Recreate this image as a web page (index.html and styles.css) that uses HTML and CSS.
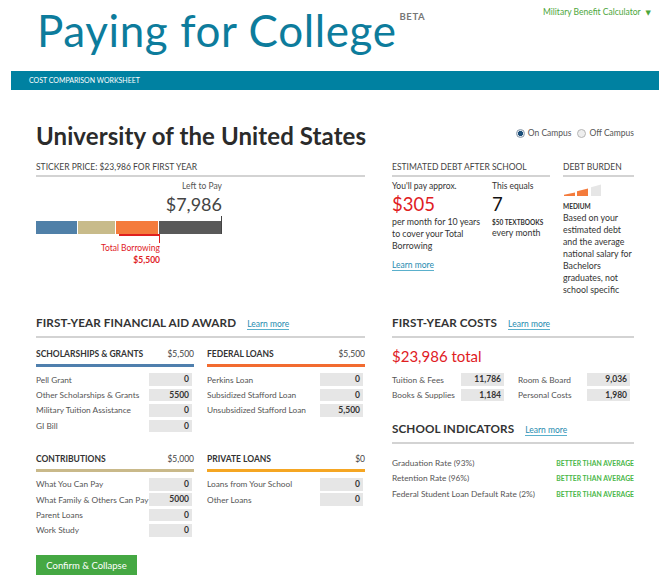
FILE: index.html
```html
<!DOCTYPE html>
<html>
<head>
<meta charset="utf-8">
<link rel="stylesheet" href="styles.css">
</head>
<body>
<div class="page">
  <header class="masthead">
    <h1 class="brand">Paying for College<span class="beta">BETA</span></h1>
    <a class="mil">Military Benefit Calculator <span class="caret">&#9660;</span></a>
  </header>
  <div class="band">COST COMPARISON WORKSHEET</div>
  <main class="content">
    <div class="school-row">
      <h2 class="school">University of the United States</h2>
      <div class="housing">
        <span class="opt"><span class="radio on"></span>On Campus</span>
        <span class="opt"><span class="radio"></span>Off Campus</span>
      </div>
    </div>
    <div class="grid">
      <section class="sticker">
        <h3 class="label-head">STICKER PRICE: $23,986 FOR FIRST YEAR</h3>
        <div class="chart">
          <div class="left-label">Left to Pay</div>
          <div class="left-amount">$7,986</div>
          <div class="bar">
            <span class="seg s-blue"></span>
            <span class="seg s-tan"></span>
            <span class="seg s-orange"></span>
            <span class="seg s-gray"></span>
          </div>
          <div class="bracket"></div>
          <div class="borrow">
            <div class="borrow-label">Total Borrowing</div>
            <div class="borrow-amount">$5,500</div>
          </div>
        </div>
      </section>
      <section class="debt">
        <div class="est">
          <h3 class="label-head">ESTIMATED DEBT AFTER SCHOOL</h3>
          <div class="est-cols">
            <div class="est-a">
              <div class="small">You'll pay approx.</div>
              <div class="big red">$305</div>
              <div class="txt">per month for 10 years to cover your Total Borrowing</div>
              <a class="learn">Learn more</a>
            </div>
            <div class="est-b">
              <div class="small">This equals</div>
              <div class="big">7</div>
              <div class="tiny-bold">$50 TEXTBOOKS</div>
              <div class="txt">every month</div>
            </div>
          </div>
        </div>
        <div class="burden">
          <h3 class="label-head">DEBT BURDEN</h3>
          <svg class="meter" width="40" height="13" viewBox="0 0 40 13">
            <polygon points="1,12 12,12 12,8.5 1,10.8" fill="#f47b3c"/>
            <polygon points="14,12 25,12 25,4.5 14,7.2" fill="#f47b3c"/>
            <polygon points="28,12 38,12 38,0.5 28,3.2" fill="#e6e6e6"/>
          </svg>
          <div class="tiny-bold">MEDIUM</div>
          <div class="txt">Based on your estimated debt and the average national salary for Bachelors graduates, not school specific</div>
        </div>
      </section>
      <section class="aid">
        <div class="sec-head"><h3>FIRST-YEAR FINANCIAL AID AWARD</h3><a class="learn">Learn more</a></div>
        <div class="aid-grid">
          <div class="group">
            <div class="group-head blue"><span>SCHOLARSHIPS &amp; GRANTS</span><span>$5,500</span></div>
            <div class="row"><span>Pell Grant</span><span class="box">0</span></div>
            <div class="row"><span>Other Scholarships &amp; Grants</span><span class="box">5500</span></div>
            <div class="row"><span>Military Tuition Assistance</span><span class="box">0</span></div>
            <div class="row"><span>GI Bill</span><span class="box">0</span></div>
          </div>
          <div class="group">
            <div class="group-head orange"><span>FEDERAL LOANS</span><span>$5,500</span></div>
            <div class="row"><span>Perkins Loan</span><span class="box">0</span></div>
            <div class="row"><span>Subsidized Stafford Loan</span><span class="box">0</span></div>
            <div class="row"><span>Unsubsidized Stafford Loan</span><span class="box">5,500</span></div>
          </div>
          <div class="group">
            <div class="group-head tan"><span>CONTRIBUTIONS</span><span>$5,000</span></div>
            <div class="row"><span>What You Can Pay</span><span class="box">0</span></div>
            <div class="row"><span>What Family &amp; Others Can Pay</span><span class="box">5000</span></div>
            <div class="row"><span>Parent Loans</span><span class="box">0</span></div>
            <div class="row"><span>Work Study</span><span class="box">0</span></div>
          </div>
          <div class="group">
            <div class="group-head yellow"><span>PRIVATE LOANS</span><span>$0</span></div>
            <div class="row"><span>Loans from Your School</span><span class="box">0</span></div>
            <div class="row"><span>Other Loans</span><span class="box">0</span></div>
          </div>
        </div>
      </section>
      <section class="costs">
        <div class="sec-head"><h3>FIRST-YEAR COSTS</h3><a class="learn">Learn more</a></div>
        <div class="total">$23,986 total</div>
        <div class="cost-grid">
          <div class="row"><span>Tuition &amp; Fees</span><span class="box">11,786</span></div>
          <div class="row"><span>Room &amp; Board</span><span class="box">9,036</span></div>
          <div class="row"><span>Books &amp; Supplies</span><span class="box">1,184</span></div>
          <div class="row"><span>Personal Costs</span><span class="box">1,980</span></div>
        </div>
        <div class="sec-head ind-head"><h3>SCHOOL INDICATORS</h3><a class="learn">Learn more</a></div>
        <div class="ind">
          <div class="ind-row"><span>Graduation Rate (93%)</span><span class="good">BETTER THAN AVERAGE</span></div>
          <div class="ind-row"><span>Retention Rate (96%)</span><span class="good">BETTER THAN AVERAGE</span></div>
          <div class="ind-row"><span>Federal Student Loan Default Rate (2%)</span><span class="good">BETTER THAN AVERAGE</span></div>
        </div>
      </section>
    </div>
    <button class="confirm">Confirm &amp; Collapse</button>
  </main>
</div>
</body>
</html>
```

FILE: styles.css
```css
* { box-sizing: border-box; }
body {
  margin: 0;
  background: #fff;
  font-family: Lato, "Open Sans", sans-serif;
  color: #444;
}
.page { width: 670px; }

.masthead {
  display: flex;
  justify-content: space-between;
  align-items: flex-start;
  height: 71px;
  padding: 0 19px 0 37px;
}
.brand {
  margin: 4px 0 0 0;
  font-size: 44px;
  font-weight: 400;
  color: #0d7c9c;
  line-height: 52px;
  letter-spacing: 0.6px;
}
.beta {
  font-size: 9.5px;
  font-weight: 700;
  color: #777;
  letter-spacing: 0.6px;
  vertical-align: top;
  line-height: 10px;
  margin-left: 3px;
  position: relative;
  top: 8px;
}
.mil {
  margin-top: 7px;
  font-size: 8.5px;
  color: #4ca63b;
}
.caret { font-size: 7px; margin-left: 3px; font-family: "DejaVu Sans", sans-serif; }

.band {
  margin: 0 11px;
  height: 19px;
  background: #0081a1;
  color: #fff;
  font-size: 7px;
  line-height: 19px;
  padding-left: 18px;
}

.content { padding: 0 36px 0 36px; }

.school-row {
  display: flex;
  justify-content: space-between;
  align-items: center;
  margin-top: 30px;
  height: 30px;
}
.school {
  margin: 0;
  font-size: 24px;
  font-weight: 700;
  color: #2b2b2b;
  letter-spacing: 0.1px;
}
.housing {
  display: flex;
  gap: 6px;
  font-size: 8.5px;
  color: #555;
  margin-top: -4px;
}
.opt { display: flex; align-items: center; gap: 3px; }
.radio {
  width: 9px; height: 9px;
  border-radius: 50%;
  border: 1px solid #b5b5b5;
  background: #eee;
  display: inline-block;
}
.radio.on {
  background: radial-gradient(circle, #1c4f7a 0 2.3px, #dde3ea 2.8px);
  border-color: #8a9aaa;
}

.grid {
  display: grid;
  grid-template-columns: 329px 242px;
  column-gap: 27px;
  margin-top: 12px;
}

.label-head {
  margin: 0;
  font-size: 8.5px;
  font-weight: 400;
  color: #444;
  padding-bottom: 2px;
  border-bottom: 2px solid #d3d3d3;
  line-height: 11px;
}

/* sticker */
.chart { width: 186px; margin-top: 4px; }
.left-label { text-align: right; font-size: 8.5px; color: #555; line-height: 11px; }
.left-amount { text-align: right; font-size: 18px; color: #444; line-height: 23px; margin-top: 1px; }
.bar {
  display: flex;
  gap: 1px;
  height: 18px;
  align-items: flex-end;
  border-right: 1px solid #444;
}
.seg { height: 13px; display: block; }
.s-blue { width: 41px; background: #5080a8; }
.s-tan { width: 37px; background: #c8bb8a; }
.s-orange { width: 42px; background: #f47b3c; }
.s-gray { flex: 1; background: #595959; }
.bracket {
  margin-left: 83px;
  width: 41px;
  height: 9px;
  border-top: 2px solid #e0201f;
  border-right: 1px solid #e0201f;
}
.borrow { width: 124px; text-align: right; color: #e0201f; }
.borrow-label { font-size: 8.5px; line-height: 11px; }
.borrow-amount { font-size: 8.5px; font-weight: 700; line-height: 11px; margin-top: 1px; }

/* debt */
.debt { display: flex; gap: 13px; }
.est { width: 158px; }
.burden { width: 71px; }
.est-cols { display: grid; grid-template-columns: 100px 58px; margin-top: 4px; }
.small { font-size: 8.5px; line-height: 11px; color: #333; }
.big { font-size: 18.5px; line-height: 23px; color: #111; margin-top: 1px; }
.red { color: #e0201f; }
.txt { font-size: 8.8px; line-height: 12px; color: #333; }
.est-a .txt { max-width: 92px; }
.tiny-bold { font-size: 6.5px; font-weight: 700; color: #333; line-height: 10px; margin-top: 2px; }
.est-b .txt { margin-top: -1px; }
.learn {
  display: inline-block;
  font-size: 8.5px;
  color: #1f8bb0;
  border-bottom: 1px solid #5ab0cc;
  line-height: 10px;
}
.est-a .learn { margin-top: 5px; }
.meter { display: block; margin-top: 7px; }
.burden .tiny-bold { margin-top: 5px; }

/* sections row 2 */
.aid, .costs { margin-top: 18px; }
.sec-head {
  display: flex;
  align-items: baseline;
  gap: 11px;
  border-bottom: 2px solid #d3d3d3;
  padding-bottom: 6px;
}
.sec-head h3 {
  margin: 0;
  font-size: 11.7px;
  font-weight: 700;
  color: #333;
  letter-spacing: 0.1px;
  line-height: 16px;
}
.aid-grid {
  display: grid;
  grid-template-columns: 158px 158px;
  column-gap: 13px;
  row-gap: 20px;
  margin-top: 11px;
}
.group-head {
  display: flex;
  justify-content: space-between;
  font-size: 8.5px;
  font-weight: 700;
  color: #333;
  line-height: 11px;
  padding-bottom: 4px;
  border-bottom: 3px solid;
  margin-bottom: 5px;
}
.group-head span:last-child { font-weight: 400; color: #444; }
.group-head.blue { border-color: #4f7fad; }
.group-head.orange { border-color: #f26b30; }
.group-head.tan { border-color: #c9b98a; }
.group-head.yellow { border-color: #f5a623; }

.row {
  display: flex;
  justify-content: space-between;
  align-items: center;
  height: 15.4px;
  font-size: 8.3px;
  color: #555;
}
.box {
  width: 43px;
  height: 12.5px;
  background: #e6e6e6;
  text-align: right;
  padding-right: 3px;
  font-size: 8.5px;
  font-weight: 700;
  color: #333;
  line-height: 12.5px;
}
.aid .box { margin-right: 2px; }

.total { font-size: 15px; color: #e0201f; line-height: 19px; margin-top: 9px; }
.cost-grid {
  display: grid;
  grid-template-columns: 112px 112px;
  column-gap: 14px;
  margin-top: 6px;
}
.ind-head { margin-top: 17px; }
.ind { margin-top: 11px; }
.ind-row {
  display: flex;
  justify-content: space-between;
  align-items: center;
  height: 15.5px;
  font-size: 8.3px;
  color: #555;
}
.good { font-size: 6.8px; font-weight: 700; color: #4ab748; }

.confirm {
  display: block;
  margin-top: 17px;
  width: 101px;
  height: 20px;
  border: 0;
  background: #45a843;
  color: #fff;
  font-family: Lato, "Open Sans", sans-serif;
  font-size: 9.5px;
  padding: 0;
}
```
